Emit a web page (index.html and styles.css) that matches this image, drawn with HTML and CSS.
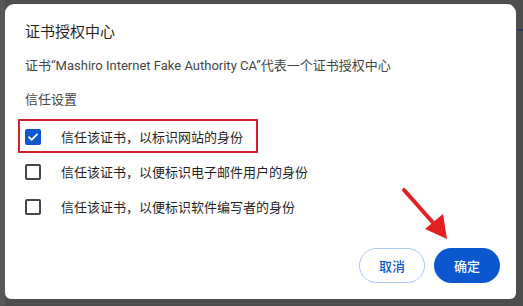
FILE: index.html
```html
<!DOCTYPE html>
<html lang="zh-CN">
<head>
<meta charset="utf-8">
<link rel="stylesheet" href="styles.css">
</head>
<body>
<div class="backdrop">
  <div class="dialog">
    <div class="title">证书授权中心</div>
    <div class="desc">证书“Mashiro Internet Fake Authority CA”代表一个证书授权中心</div>
    <div class="section">信任设置</div>
    <div class="options">
      <div class="highlight"></div>
      <label class="row">
        <span class="box checked">
          <svg viewBox="0 0 16 16" width="16" height="16"><path d="M4 8.2l2.6 2.6L12 5.4" fill="none" stroke="#fff" stroke-width="1.8" stroke-linecap="round" stroke-linejoin="round"/></svg>
        </span>
        <span class="text">信任该证书，以标识网站的身份</span>
      </label>
      <label class="row">
        <span class="box"></span>
        <span class="text">信任该证书，以便标识电子邮件用户的身份</span>
      </label>
      <label class="row">
        <span class="box"></span>
        <span class="text">信任该证书，以便标识软件编写者的身份</span>
      </label>
    </div>
    <div class="actions">
      <button class="btn cancel">取消</button>
      <button class="btn ok">确定</button>
    </div>
    <svg class="arrow" viewBox="0 0 60 60" width="60" height="60">
      <line x1="6" y1="6" x2="38" y2="42" stroke="#e0211f" stroke-width="4" stroke-linecap="round"/>
      <polygon points="49,55 27,45 45,30" fill="#e0211f"/>
    </svg>
  </div>
</div>
</body>
</html>
```

FILE: styles.css
```css
* { box-sizing: border-box; }
html, body { margin: 0; padding: 0; }
body {
  width: 523px;
  height: 306px;
  overflow: hidden;
  background: #4f4f4f;
  font-family: Roboto, "Noto Sans CJK SC", sans-serif;
}
.backdrop {
  width: 523px;
  height: 306px;
  padding: 4px 7px 7px 5px;
  background:
    linear-gradient(#1f3a66, #1f3a66) 518px 29px / 5px 2px no-repeat,
    linear-gradient(90deg, #575757 0 5px, #4e4e4e 5px);
}
.dialog {
  position: relative;
  width: 511px;
  height: 295px;
  background: #fff;
  border-radius: 9px 9px 6px 6px;
  padding: 18px 16px 16px 20px;
  display: flex;
  flex-direction: column;
}
.title {
  font-size: 15px;
  line-height: 20px;
  color: #1f1f1f;
}
.desc {
  margin-top: 14px;
  font-size: 13px;
  line-height: 20px;
  color: #444746;
}
.section {
  margin-top: 14px;
  font-size: 13px;
  line-height: 20px;
  color: #444746;
}
.options {
  position: relative;
  margin-top: 9px;
  display: flex;
  flex-direction: column;
}
.highlight {
  position: absolute;
  left: -7px;
  top: 0;
  width: 240px;
  height: 34px;
  border: 2.5px solid #d3202e;
  pointer-events: none;
}
.row {
  height: 35px;
  display: flex;
  align-items: center;
  gap: 20px;
}
.box {
  width: 16px;
  height: 16px;
  border: 2px solid #444746;
  border-radius: 2px;
  flex: none;
  display: flex;
}
.box.checked {
  background: #0b57d0;
  border-color: #0b57d0;
}
.box.checked svg { margin: -2px; }
.text {
  font-size: 13px;
  color: #1f1f1f;
}
.actions {
  margin-top: auto;
  display: flex;
  justify-content: flex-end;
  gap: 9px;
}
.btn {
  width: 66px;
  height: 35px;
  border-radius: 18px;
  font-family: Roboto, "Noto Sans CJK SC", sans-serif;
  font-size: 13px;
  font-weight: 500;
  padding: 0;
}
.cancel {
  background: #fff;
  border: 1px solid #a8c7fa;
  color: #0b57d0;
}
.ok {
  background: #0b57d0;
  border: none;
  color: #fff;
}
.arrow {
  position: absolute;
  left: 393px;
  top: 180px;
}
```
